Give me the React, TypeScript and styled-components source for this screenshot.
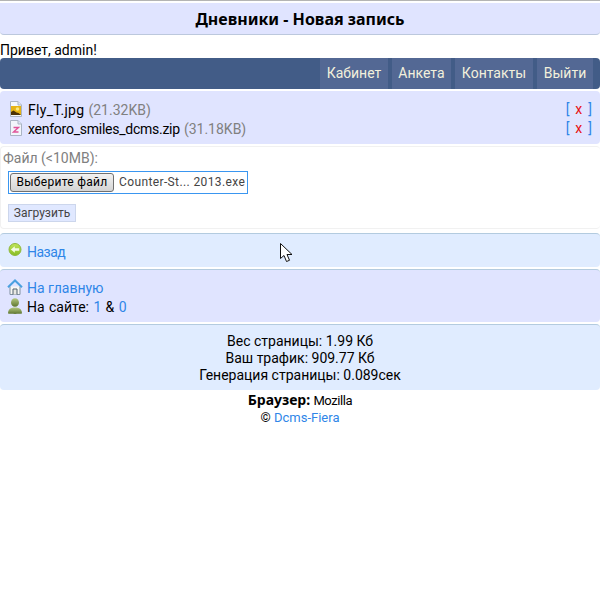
import React from 'react'
import styled, { createGlobalStyle } from 'styled-components'

const GlobalStyle = createGlobalStyle`
  html, body {
    margin: 0;
    padding: 0;
    background: #fff;
  }
  body {
    font-family: Roboto, 'Noto Sans', sans-serif;
    font-size: 14px;
    line-height: 19px;
    color: #000;
  }
  a {
    color: #2f86e8;
    text-decoration: none;
  }
`

const Page = styled.div`
  position: relative;
  width: 600px;
  height: 600px;
  overflow: hidden;
`

const TopLine = styled.div`
  height: 1px;
  background: #b4b4b4;
`

const Title = styled.div`
  height: 31px;
  margin-bottom: 7px;
  border-top: 2px solid #fff;
  background: #e0e4ff;
  border-bottom: 1px solid #bcc8dd;
  border-radius: 0 0 4px 4px;
  text-align: center;
  font-family: 'Noto Sans', sans-serif;
  font-size: 16px;
  font-weight: bold;
  line-height: 33px;
`

const Greeting = styled.div`
  height: 16px;
  line-height: 17px;
`

const Nav = styled.nav`
  display: flex;
  justify-content: flex-end;
  gap: 4px;
  height: 31px;
  padding-right: 7px;
  margin-bottom: 2px;
  background: #425c87;
  border-radius: 4px;
`

const NavItem = styled.a<{ $w: number }>`
  display: block;
  width: ${(p) => p.$w}px;
  background: #536894;
  color: #f2f0dc;
  line-height: 31px;
  text-align: center;
`

const Panel = styled.div<{ $bg?: string }>`
  background: ${(p) => p.$bg || '#e0e4ff'};
  border-top: 1px solid #b3cbdf;
  border-radius: 4px;
  margin-bottom: 2px;
`

const FilesPanel = styled(Panel)`
  border-top: 0;
  padding: 10px 8px 6px 10px;
  height: 37px;
`

const FileRow = styled.div`
  display: flex;
  align-items: center;
  height: 19px;
`

const PageIcon = styled.svg`
  flex: none;
  margin-top: -4px;
`

const FileName = styled.span<{ $spacing: number }>`
  margin-left: 6px;
  letter-spacing: ${(p) => p.$spacing}px;
`

const Size = styled.span`
  margin-left: 4px;
  color: #808080;
`

const Remove = styled.span`
  margin-left: auto;
  color: #2f86e8;
  word-spacing: 2.5px;
  position: relative;
  top: -1px;

  b {
    font-weight: normal;
    color: #e81010;
  }
`

const FormBox = styled.form`
  height: 83px;
  margin-bottom: 4px;
  border: 1px solid #f1f1f1;
  border-width: 1px 0 1px 1px;
  border-radius: 4px;
  box-sizing: border-box;
  padding-top: 2px;
  padding-left: 2px;
  color: #808080;
`

const FileInputBox = styled.div`
  display: flex;
  align-items: center;
  width: 238px;
  height: 21px;
  margin: 3px 0 10px 5px;
  border: 1px solid #3a96f0;
  color: #444;
  font-size: 12px;
`

const ChooseButton = styled.span`
  display: block;
  width: 104px;
  height: 19px;
  margin-left: 1px;
  box-sizing: border-box;
  border: 1px solid #707070;
  border-radius: 3px;
  background: linear-gradient(#f2f2f2, #d4d4d4);
  color: #000;
  text-align: center;
  line-height: 17px;
  letter-spacing: 0.3px;
`

const FileChosen = styled.span`
  margin-left: 5px;
  white-space: nowrap;
  letter-spacing: 0.38px;
`

const Upload = styled.span`
  display: block;
  width: 66px;
  height: 16px;
  margin-left: 5px;
  border: 1px solid #ccd6ec;
  background: #e0e8ff;
  color: #444;
  font-size: 12px;
  line-height: 16px;
  text-align: center;
`

const BackPanel = styled(Panel)`
  height: 24px;
  padding: 9px 0 0 8px;
  display: flex;
  align-items: flex-start;
  gap: 5px;
`

const BackLink = styled.a`
  letter-spacing: -0.5px;
`

const HomePanel = styled(Panel)`
  height: 38px;
  padding: 9px 0 5px 7px;
`

const HomeRow = styled.div`
  display: flex;
  align-items: center;
  gap: 4px;
  height: 19px;

  svg {
    margin-top: -4px;
  }
`

const OnlineText = styled.span`
  word-spacing: 0.9px;
`

const Stats = styled(Panel)`
  margin-bottom: 0;
  height: 57px;
  padding-top: 8px;
  text-align: center;
  line-height: 17px;
`

const Footer = styled.div`
  padding-top: 2px;
  text-align: center;
  line-height: 17px;
  font-size: 13px;

  b {
    font-family: 'Noto Sans', sans-serif;
    font-size: 14px;
    line-height: 1;
  }
`

const Browser = styled.span`
  letter-spacing: -0.4px;
`

const Pointer = styled.svg`
  position: absolute;
  left: 280px;
  top: 243px;
`

const ImageIcon = () => (
  <PageIcon width="12" height="16" viewBox="0 0 12 16">
    <path d="M.5.5h7.500l3.500 3.500v11.500H.5z" fill="#f4f8fc" stroke="#aab4c4" />
    <path d="M8 .5v3.500h3.500" fill="#dde6f2" stroke="#aab4c4" />
    <rect x="1" y="5" width="10" height="9" fill="#e6b414" />
    <circle cx="7.500" cy="8" r="1.800" fill="#fbe87a" />
    <path d="M1 14v-3l2.500-1.500 3 2 2 .5 2.500 2z" fill="#4c3208" />
  </PageIcon>
)

const ZipIcon = () => (
  <PageIcon width="12" height="16" viewBox="0 0 12 16">
    <path d="M.5.5h7.500l3.500 3.500v11.500H.5z" fill="#f2f6fb" stroke="#aab4c4" />
    <path d="M8 .5v3.500h3.500" fill="#dde6f2" stroke="#aab4c4" />
    <path d="M3.500 7.500h5l-5 4.500h5" fill="none" stroke="#e0559a" strokeWidth="1.400" />
  </PageIcon>
)

const BackIcon = () => (
  <svg width="14" height="13" viewBox="0 0 14 13">
    <defs>
      <linearGradient id="backFill" x1="0" y1="0" x2="0" y2="1">
        <stop offset="0" stopColor="#c2e65a" />
        <stop offset="1" stopColor="#86bc22" />
      </linearGradient>
    </defs>
    <circle cx="7" cy="6.500" r="6" fill="url(#backFill)" stroke="#8fb83c" />
    <path d="M2.800 6.500L6.800 3.300v2h4.400v2.400H6.800v2z" fill="#f4fbe4" />
  </svg>
)

const HomeIcon = () => (
  <svg width="16" height="16" viewBox="0 0 16 16">
    <path d="M3 7.500v8h10v-8" fill="#f8f8f4" stroke="#8090a0" />
    <path d="M1 8.200L8 1.500l7 6.700" fill="none" stroke="#4aa0e0" strokeWidth="2" />
    <path d="M6 15.500V10h4v5.500" fill="#e8e8e2" stroke="#50606e" />
  </svg>
)

const UserIcon = () => (
  <svg width="16" height="16" viewBox="0 0 16 16">
    <defs>
      <linearGradient id="userFill" x1="0" y1="0" x2="0" y2="1">
        <stop offset="0" stopColor="#b4c880" />
        <stop offset="1" stopColor="#5e7630" />
      </linearGradient>
    </defs>
    <ellipse cx="8" cy="4.500" rx="4" ry="4.300" fill="url(#userFill)" />
    <path d="M1 15.500c0-4.500 3-6 7-6s7 1.500 7 6c-3 .5-11 .5-14 0z" fill="url(#userFill)" />
  </svg>
)

export default function App() {
  return (
    <Page>
      <GlobalStyle />
      <TopLine />
      <Title>Дневники - Новая запись</Title>
      <Greeting>Привет, admin!</Greeting>
      <Nav>
        <NavItem $w={68}>Кабинет</NavItem>
        <NavItem $w={59}>Анкета</NavItem>
        <NavItem $w={78}>Контакты</NavItem>
        <NavItem $w={56}>Выйти</NavItem>
      </Nav>
      <FilesPanel>
        <FileRow>
          <ImageIcon />
          <FileName $spacing={0.3}>Fly_T.jpg</FileName>
          <Size>(21.32KB)</Size>
          <Remove>[ <b>x</b> ]</Remove>
        </FileRow>
        <FileRow>
          <ZipIcon />
          <FileName $spacing={-0.25}>xenforo_smiles_dcms.zip</FileName>
          <Size>(31.18KB)</Size>
          <Remove>[ <b>x</b> ]</Remove>
        </FileRow>
      </FilesPanel>
      <FormBox>
        Файл (&lt;10MB):
        <FileInputBox>
          <ChooseButton>Выберите файл</ChooseButton>
          <FileChosen>Counter-St... 2013.exe</FileChosen>
        </FileInputBox>
        <Upload>Загрузить</Upload>
      </FormBox>
      <BackPanel $bg="#e0ecff">
        <BackIcon />
        <BackLink>Назад</BackLink>
      </BackPanel>
      <HomePanel>
        <HomeRow>
          <HomeIcon />
          <a>На главную</a>
        </HomeRow>
        <HomeRow>
          <UserIcon />
          <OnlineText>
            На сайте: <a>1</a> &amp; <a>0</a>
          </OnlineText>
        </HomeRow>
      </HomePanel>
      <Stats $bg="#e0ecff">
        <div>Вес страницы: 1.99 Кб</div>
        <div>Ваш трафик: 909.77 Кб</div>
        <div>Генерация страницы: 0.089сек</div>
      </Stats>
      <Footer>
        <div>
          <b>Браузер:</b> <Browser>Mozilla</Browser>
        </div>
        <div>
          © <a>Dcms-Fiera</a>
        </div>
      </Footer>
      <Pointer width="13" height="20" viewBox="0 0 13 20">
        <path d="M.5.5v15l3.500-3 2.500 6 3-1.200-2.500-5.800h5z" fill="#fff" stroke="#111" />
      </Pointer>
    </Page>
  )
}
